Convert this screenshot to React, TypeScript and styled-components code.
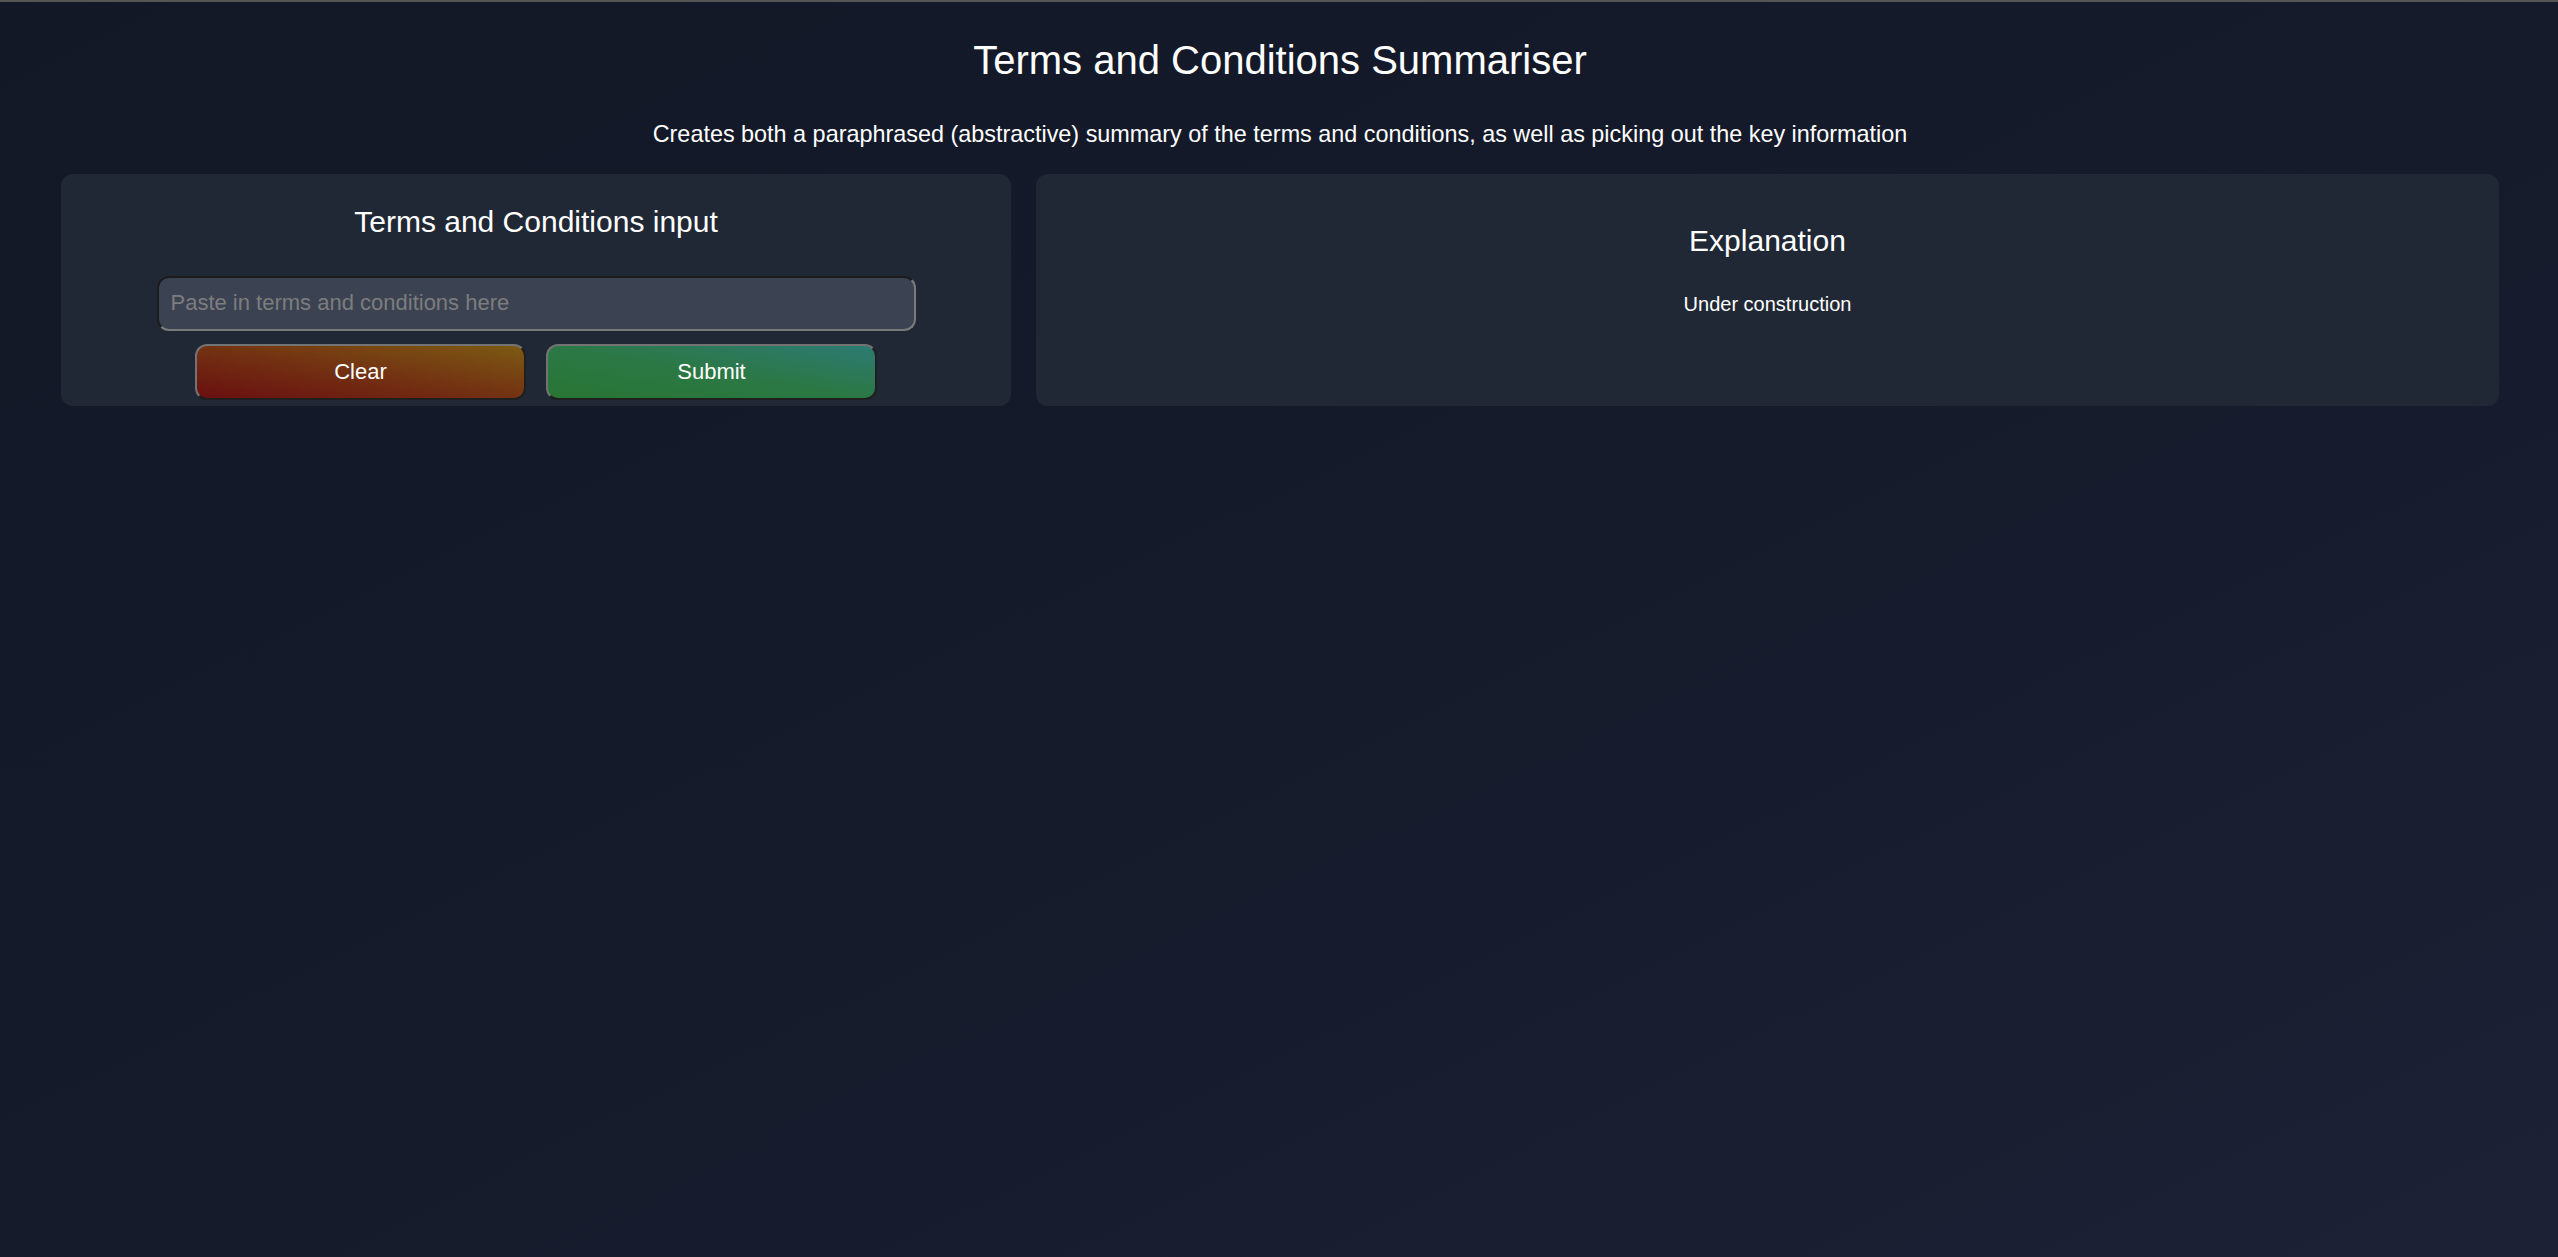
import React from "react";
import styled, { createGlobalStyle } from "styled-components";

const GlobalStyle = createGlobalStyle`
  html, body {
    margin: 0;
    padding: 0;
    background: #121826;
  }
  * { box-sizing: border-box; }
`;

const Page = styled.div`
  min-height: 100vh;
  border-top: 2px solid #555555;
  background: linear-gradient(to bottom right, #121826 0%, #151b2b 55%, #1c2135 100%);
  font-family: "Liberation Sans", Arial, sans-serif;
  color: #ffffff;
  display: flex;
  flex-direction: column;
  align-items: stretch;
  padding: 0 59px 40px 61px;
`;

const Title = styled.h1`
  margin: 35px 0 0;
  font-size: 40px;
  line-height: 46px;
  font-weight: 400;
  text-align: center;
`;

const Subtitle = styled.h3`
  margin: 38px 0 0;
  font-size: 23.4px;
  line-height: 27px;
  font-weight: 400;
  text-align: center;
`;

const Columns = styled.div`
  margin-top: 26px;
  display: grid;
  grid-template-columns: 950px 1fr;
  gap: 25px;
`;

const Panel = styled.section<{ $top: number }>`
  background: #212835;
  border-radius: 12px;
  height: 232px;
  padding: ${(p) => p.$top}px 0 0;
  display: flex;
  flex-direction: column;
  align-items: center;
`;

const PanelHeading = styled.h2<{ $gap: number }>`
  margin: 0 0 ${(p) => p.$gap}px;
  font-size: 30px;
  line-height: 34.5px;
  font-weight: 400;
  text-align: center;
`;

const TextInput = styled.input`
  width: 759px;
  height: 55px;
  background: #3b4252;
  border-radius: 12px;
  border-width: 2px;
  border-style: solid;
  border-color: #1c1c1c #7a7a7a #7a7a7a #1c1c1c;
  padding: 0 12px;
  font-family: "Liberation Sans", Arial, sans-serif;
  font-size: 22px;
  color: #ffffff;
  outline: none;
  &::placeholder {
    color: #7d7d7d;
  }
`;

const ButtonRow = styled.div`
  margin-top: 13px;
  display: flex;
  gap: 20px;
`;

const ActionButton = styled.button<{ $from: string; $mid: string; $to: string }>`
  width: 331px;
  height: 56px;
  padding-top: 2px;
  border-radius: 12px;
  border-width: 2px;
  border-style: solid;
  border-color: #737373 #1f1f1f #1f1f1f #737373;
  background: linear-gradient(to top right, ${(p) => p.$from}, ${(p) => p.$mid}, ${(p) => p.$to});
  color: #ffffff;
  font-family: "Liberation Sans", Arial, sans-serif;
  font-size: 22px;
  cursor: pointer;
`;

const BodyText = styled.p`
  margin: 0;
  font-size: 20px;
  line-height: 23px;
  text-align: center;
`;

export default function App() {
  return (
    <>
      <GlobalStyle />
      <Page>
        <Title>Terms and Conditions Summariser</Title>
        <Subtitle>
          Creates both a paraphrased (abstractive) summary of the terms and conditions, as well as
          picking out the key information
        </Subtitle>
        <Columns>
          <Panel $top={31}>
            <PanelHeading $gap={36}>Terms and Conditions input</PanelHeading>
            <TextInput placeholder="Paste in terms and conditions here" />
            <ButtonRow>
              <ActionButton $from="#6a0f10" $mid="#733212" $to="#7c5a13">
                Clear
              </ActionButton>
              <ActionButton $from="#297534" $mid="#2b7845" $to="#2d7a74">
                Submit
              </ActionButton>
            </ButtonRow>
          </Panel>
          <Panel $top={50}>
            <PanelHeading $gap={34}>Explanation</PanelHeading>
            <BodyText>Under construction</BodyText>
          </Panel>
        </Columns>
      </Page>
    </>
  );
}
